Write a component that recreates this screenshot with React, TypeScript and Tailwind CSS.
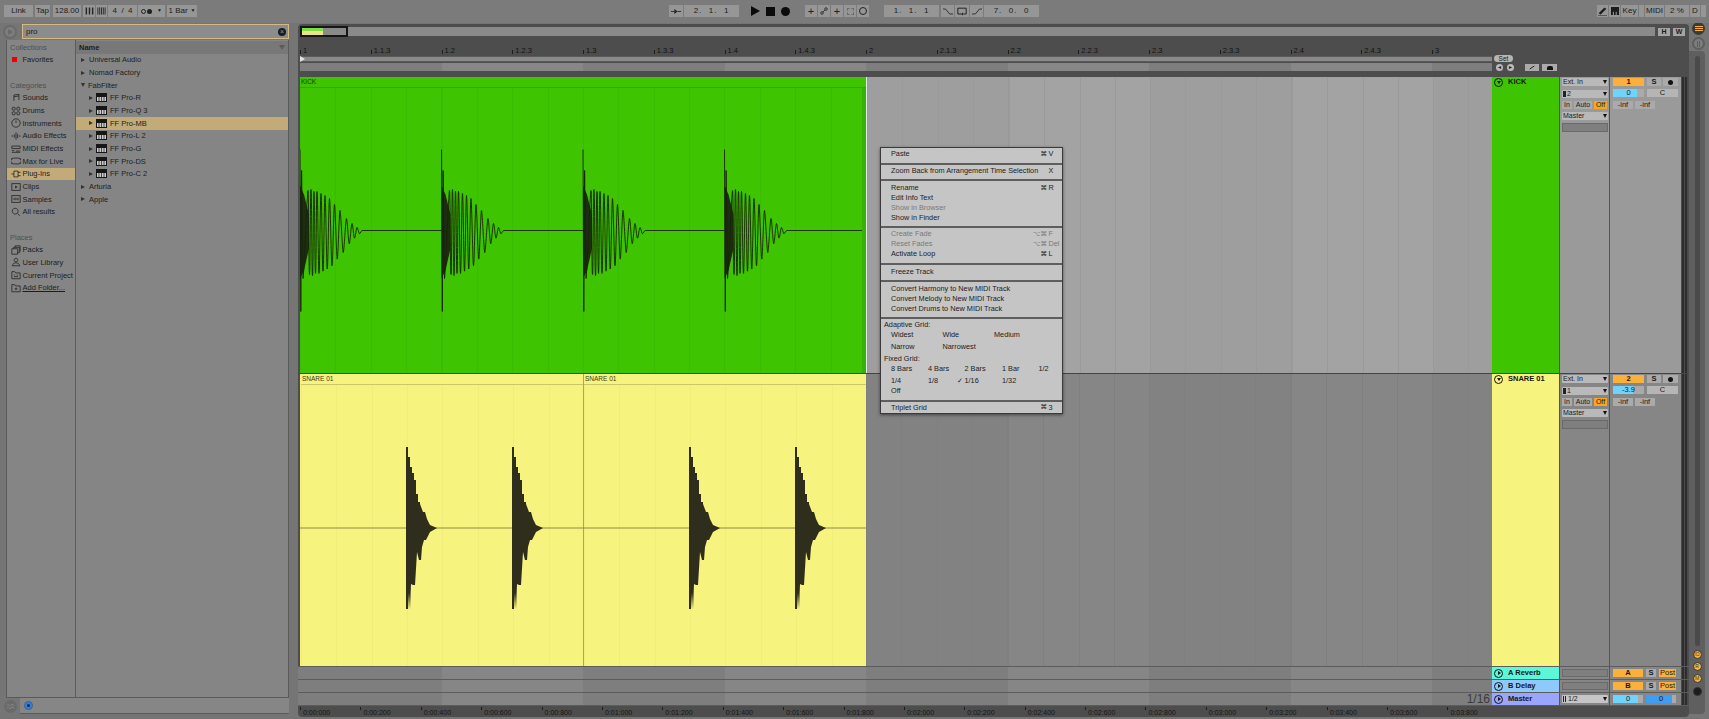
import type { ReactNode } from "react";

const FONT = "font-['Liberation_Sans','Noto_Sans',sans-serif]";

const RULER = ["1", "1.1.3", "1.2", "1.2.3", "1.3", "1.3.3", "1.4", "1.4.3", "2", "2.1.3", "2.2", "2.2.3", "2.3", "2.3.3", "2.4", "2.4.3", "3"];
const TIMES = ["0:00:000", "0:00:200", "0:00:400", "0:00:600", "0:00:800", "0:01:000", "0:01:200", "0:01:400", "0:01:600", "0:01:800", "0:02:000", "0:02:200", "0:02:400", "0:02:600", "0:02:800", "0:03:000", "0:03:200", "0:03:400", "0:03:600", "0:03:800"];

const stroke = { fill: "none", stroke: "#262626", strokeWidth: 1 };

const Glyph = ({ children }: { children: ReactNode }) => (
  <svg viewBox="0 0 12 12" className="w-[10px] h-[10px] shrink-0">
    {children}
  </svg>
);

const ICONS: Record<string, ReactNode> = {
  sounds: <path {...stroke} d="M3.5 9.5V2.5l6-1v7M3.5 4.5l6-1" />,
  drums: (
    <g {...stroke}>
      <rect x="1.5" y="1.5" width="3.5" height="3.5" rx="1" />
      <rect x="7" y="1.5" width="3.5" height="3.5" rx="1" />
      <rect x="1.5" y="7" width="3.5" height="3.5" rx="1" />
      <rect x="7" y="7" width="3.5" height="3.5" rx="1" />
    </g>
  ),
  instruments: <path {...stroke} d="M6 1a5 5 0 1 0 .01 0M6 3v3" />,
  audio: <path {...stroke} d="M0.5 6h2M4 4v4M6 1.5v9M8 3.5v5M9.5 6h2" />,
  midi: <path {...stroke} d="M1 2.5h10v3H1zM1 8h3M6 8.5h5M1 10h10" />,
  max: <path {...stroke} d="M3 2.5h6a2 2 0 0 1 0 7H3a2 2 0 0 1 0-7zM1.5 4h-1M1.5 8h-1M11.5 4h-1M11.5 8h-1" />,
  plug: <path {...stroke} d="M3.5 2.5h5v7h-5zM0.5 6h3M8.5 4h3M8.5 8h3" />,
  clips: <g><rect {...stroke} x="1" y="2" width="10" height="8" /><path d="M5 4.2 8 6 5 7.8z" fill="#262626" /></g>,
  samples: <g><rect {...stroke} x="1" y="2" width="10" height="8" /><path {...stroke} d="M3.5 5v2M5 4.5v3M7 5v2M8.5 4.5v3" /></g>,
  search: <path {...stroke} d="M5 1.5a3.5 3.5 0 1 0 .01 0M7.6 7.6l3 3" />,
  packs: <path {...stroke} d="M1 4.5h7v6.5H1zM3 4.5V2.8h7v6.4H8M5 2.8V1h6v6.4h-1" />,
  user: <path {...stroke} d="M6 1.5a2.2 2.2 0 1 0 .01 0M1 10.5h10M2 10.5c0-3 2-3.5 4-3.5s4 .5 4 3.5" />,
  project: <path {...stroke} d="M1 2h3.5l1 1.5H11V10.5H1zM3.5 6h1M7 6h1.5M3.5 8h5" />,
  folder: <path {...stroke} d="M1 2h3.5l1 1.5H11V10.5H1zM4.5 7h3M6 5.5v3" />,
};

type SideItem = { label?: string; icon?: string; head?: boolean; active?: boolean; red?: boolean; link?: boolean };
const SIDE: SideItem[] = [
  { label: "Collections", head: true },
  { label: "Favorites", red: true },
  {},
  { label: "Categories", head: true },
  { label: "Sounds", icon: "sounds" },
  { label: "Drums", icon: "drums" },
  { label: "Instruments", icon: "instruments" },
  { label: "Audio Effects", icon: "audio" },
  { label: "MIDI Effects", icon: "midi" },
  { label: "Max for Live", icon: "max" },
  { label: "Plug-Ins", icon: "plug", active: true },
  { label: "Clips", icon: "clips" },
  { label: "Samples", icon: "samples" },
  { label: "All results", icon: "search" },
  {},
  { label: "Places", head: true },
  { label: "Packs", icon: "packs" },
  { label: "User Library", icon: "user" },
  { label: "Current Project", icon: "project" },
  { label: "Add Folder...", icon: "folder", link: true },
];

type ListItem = { label: string; plugin?: boolean; open?: boolean; active?: boolean };
const LIST: ListItem[] = [
  { label: "Universal Audio" },
  { label: "Nomad Factory" },
  { label: "FabFilter", open: true },
  { label: "FF Pro-R", plugin: true },
  { label: "FF Pro-Q 3", plugin: true },
  { label: "FF Pro-MB", plugin: true, active: true },
  { label: "FF Pro-L 2", plugin: true },
  { label: "FF Pro-G", plugin: true },
  { label: "FF Pro-DS", plugin: true },
  { label: "FF Pro-C 2", plugin: true },
  { label: "Arturia" },
  { label: "Apple" },
];

function Ctl({ w, children, className = "" }: { w: string; children?: ReactNode; className?: string }) {
  return (
    <div className={`${w} h-[12px] shrink-0 bg-[#969696] flex items-center justify-center text-[8px] text-[#202020] ${className}`}>
      {children}
    </div>
  );
}

function Bars({ dense }: { dense?: boolean }) {
  return (
    <svg viewBox="0 0 10 8" className="w-[9px] h-[8px]">
      <path d={dense ? "M1 0v8M3 0v8M5 0v8M7 0v8M9 0v8" : "M1.5 0v8M5 0v8M8.5 0v8"} stroke="#262626" strokeWidth={dense ? 1 : 1.6} />
    </svg>
  );
}

function TopBar() {
  return (
    <div className="h-[23px] shrink-0 bg-[#7b7b7b] flex items-start pt-[5px] relative">
      <div className="flex ml-[4px] w-[665px]">
        <Ctl w="w-[29px]">Link</Ctl>
        <Ctl w="w-[15px]" className="ml-[2px]">Tap</Ctl>
        <Ctl w="w-[28px]" className="ml-[3px]">128.00</Ctl>
        <Ctl w="w-[12px]" className="ml-[2px]"><Bars /></Ctl>
        <Ctl w="w-[11px]" className="ml-[1px]"><Bars dense /></Ctl>
        <Ctl w="w-[29px]" className="ml-[1px]">4&nbsp;&nbsp;/&nbsp;&nbsp;4</Ctl>
        <Ctl w="w-[27px]" className="ml-[1px] gap-[1px]">
          <span className="w-[5px] h-[5px] rounded-full border border-[#222]" />
          <span className="w-[5px] h-[5px] rounded-full bg-[#222]" />
          <span className="ml-[4px] text-[5px]">▼</span>
        </Ctl>
        <Ctl w="w-[30px]" className="ml-[2px] gap-[3px]">1 Bar <span className="text-[5px]">▼</span></Ctl>
      </div>
      <Ctl w="w-[14px]">
        <svg viewBox="0 0 12 6" className="w-[10px] h-[5px]"><path d="M0 3h4M8 3h4" stroke="#222" /><path d="M4 0l4 3-4 3z" fill="#222" /></svg>
      </Ctl>
      <Ctl w="w-[55px]" className="ml-[1px] tracking-[1px]">2.&nbsp;&nbsp;1.&nbsp;&nbsp;1</Ctl>
      <div className="flex items-center h-[12px] ml-[12px] gap-[6px] w-[54px]">
        <span className="w-0 h-0 border-y-[5px] border-y-transparent border-l-[9px] border-l-[#0b0b0b]" />
        <span className="w-[9px] h-[9px] bg-[#0b0b0b]" />
        <span className="w-[9px] h-[9px] rounded-full bg-[#0b0b0b]" />
      </div>
      <div className="flex gap-[1px]">
        <Ctl w="w-[12px]" className="text-[11px]">+</Ctl>
        <Ctl w="w-[12px]">
          <svg viewBox="0 0 10 10" className="w-[8px] h-[8px]"><path d="M2 8l6-6" stroke="#222" /><circle cx="2.5" cy="7.5" r="1.6" fill="#969696" stroke="#222" /><circle cx="7.5" cy="2.5" r="1.6" fill="#969696" stroke="#222" /></svg>
        </Ctl>
        <Ctl w="w-[12px]" className="text-[#6b6b6b] text-[11px]">+</Ctl>
        <Ctl w="w-[12px]">
          <span className="w-[7px] h-[7px] border border-dashed border-[#6b6b6b]" />
        </Ctl>
        <Ctl w="w-[12px]">
          <span className="w-[8px] h-[8px] rounded-full border-[1.5px] border-[#222]" />
        </Ctl>
      </div>
      <Ctl w="w-[55px]" className="ml-[15px] tracking-[1px]">1.&nbsp;&nbsp;1.&nbsp;&nbsp;1</Ctl>
      <Ctl w="w-[13px]" className="ml-[2px]">
        <svg viewBox="0 0 12 8" className="w-[10px] h-[7px]"><path d="M0 1h3l5 6h4" fill="none" stroke="#222" /></svg>
      </Ctl>
      <Ctl w="w-[14px]" className="ml-[1px]">
        <svg viewBox="0 0 12 10" className="w-[10px] h-[9px]"><path d="M6 8H1V1h10v7H8" fill="none" stroke="#222" strokeWidth="1.2" /><path d="M6 6v4l2-2z" fill="#222" /></svg>
      </Ctl>
      <Ctl w="w-[13px]" className="ml-[1px]">
        <svg viewBox="0 0 12 8" className="w-[10px] h-[7px]"><path d="M0 7h4l5-6h3" fill="none" stroke="#222" /></svg>
      </Ctl>
      <Ctl w="w-[55px]" className="ml-[1px] tracking-[1px]">7.&nbsp;&nbsp;0.&nbsp;&nbsp;0</Ctl>

      <div className="ml-auto flex mr-[3px]">
        <Ctl w="w-[11px]">
          <svg viewBox="0 0 10 10" className="w-[9px] h-[9px]"><path d="M1 7l6-6 2 1-6 6zM0 9.5h10" fill="#1c1c1c" stroke="#1c1c1c" strokeWidth=".6" /></svg>
        </Ctl>
        <Ctl w="w-[11px]" className="ml-[1px]">
          <svg viewBox="0 0 10 10" className="w-[8px] h-[8px]"><path d="M0 0h10v10H0z" fill="#1c1c1c" /><path d="M3 6v4M6.5 6v4" stroke="#bbb" /></svg>
        </Ctl>
        <Ctl w="w-[17px]" className="ml-[1px]">Key</Ctl>
        <Ctl w="w-[5px]" className="ml-[1px]" />
        <Ctl w="w-[19px]" className="ml-[1px]">MIDI</Ctl>
        <Ctl w="w-[24px]" className="ml-[1px]">2 %</Ctl>
        <Ctl w="w-[10px]" className="ml-[1px]">D</Ctl>
        <Ctl w="w-[5px]" className="ml-[1px]" />
      </div>
    </div>
  );
}

function Browser() {
  return (
    <div className="w-[298px] shrink-0 flex flex-col">
      <div className="h-[17px] flex items-center">
        <div className="w-[14px] h-[14px] ml-[3px] rounded-full border-2 border-[#6a6a6a] bg-[#7d7d7d] flex items-center justify-center">
          <span className="w-0 h-0 border-y-[3px] border-y-transparent border-l-[5px] border-l-[#6a6a6a] ml-px" />
        </div>
        <div className="ml-[5px] w-[267px] h-[15px] bg-[#8c8c8c] border border-[#d2bb83] flex items-center pl-[3px] pr-[2px] text-[8px] text-[#1c1c1c]">
          pro
          <span className="ml-auto w-[8px] h-[8px] rounded-full bg-[#1c1c1c] text-[#999] text-[7px] leading-[8px] text-center">×</span>
        </div>
      </div>
      <div className="ml-[6px] w-[283px] h-[658px] flex bg-[#858585] border-b border-[#5a5a5a] border-x">
        <div className="w-[69px] shrink-0 border-r border-[#5c5c5c] pt-px">
          {SIDE.map((s, i) => (
            <div key={i} className={`h-[12.67px] flex items-center gap-[1.5px] whitespace-nowrap text-[7.5px] ${s.active ? "bg-[#c2ab78]" : ""} ${s.head ? "pl-[3px] text-[#4f4f4f]" : "pl-[4px] text-[#1d1d1d]"}`}>
              {s.red && <span className="w-[5px] h-[5px] ml-[1px] mr-[4px] bg-[#f00000]" />}
              {s.icon && <Glyph>{ICONS[s.icon]}</Glyph>}
              <span className={s.link ? "underline" : ""}>{s.label}</span>
            </div>
          ))}
        </div>
        <div className="flex-1 pt-px">
          <div className="h-[12.67px] bg-[#787878] flex items-center pl-[3px] pr-[3px] text-[7.5px] font-semibold text-[#1d1d1d]">
            Name
            <span className="ml-auto w-0 h-0 border-x-[3px] border-x-transparent border-t-[5px] border-t-[#5c5c5c]" />
          </div>
          {LIST.map((r) => (
            <div key={r.label} className={`h-[12.67px] flex items-center text-[7.5px] text-[#1d1d1d] ${r.plugin ? "pl-[13px]" : "pl-[5px]"} ${r.active ? "bg-[#c2ab78]" : ""}`}>
              {r.open ? (
                <span className="w-0 h-0 border-x-[2.5px] border-x-transparent border-t-[4px] border-t-[#333]" />
              ) : (
                <span className="w-0 h-0 border-y-[2.5px] border-y-transparent border-l-[4px] border-l-[#333] mr-px" />
              )}
              {r.plugin && (
                <svg viewBox="0 0 11 9" className="w-[11px] h-[9px] ml-[2px]">
                  <rect x=".5" y=".5" width="10" height="8" fill="#c9c9c9" stroke="#161616" />
                  <rect x="1" y="1" width="9" height="3" fill="#161616" />
                  <path d="M3 4v4M5.5 4v4M8 4v4" stroke="#161616" strokeWidth=".7" />
                </svg>
              )}
              <span className="ml-[3px]">{r.label}</span>
            </div>
          ))}
        </div>
      </div>
      <div className="flex h-[16px]">
        <div className="w-[20px] flex items-center justify-center">
          <span className="w-[13px] h-[13px] rounded-full bg-[#6a6a6a] flex items-center justify-center">
            <svg viewBox="0 0 10 10" className="w-[9px] h-[9px]"><path d="M1 4c2-3 3 2 4 0s2-2 4 0M1 7c2-3 3 2 4 0s2-2 4 0" fill="none" stroke="#8a8a8a" /></svg>
          </span>
        </div>
        <div className="w-[269px] bg-[#868686] border-b border-[#5a5a5a] flex items-center pl-[4px]">
          <span className="w-[9px] h-[9px] rounded-full bg-[#2f7fe0] border border-[#45617f] flex items-center justify-center">
            <span className="w-[3px] h-[3px] rounded-full bg-[#0c2c55]" />
          </span>
        </div>
      </div>
    </div>
  );
}

function KickWave() {
  const starts = [0, 141.5, 283, 424.5];
  const peaks: [number, number][] = [[8, 40], [11, 41], [14, 39], [17, 39], [21, 37], [25, 35], [29.5, 32], [34.5, 26], [40, 20], [46.5, 12], [52, 7], [57, 3]];
  const c = 142.5;
  const ripples = (x0: number) => {
    let d = `M${x0} ${c - 81}L${x0 + 0.8} ${c + 81}L${x0 + 1.6} ${c - 60}L${x0 + 3} ${c + 48}`;
    let x = x0 + 3;
    let y = c + 48;
    peaks.forEach(([t, a], i) => {
      const next = peaks[i + 1] ? peaks[i + 1][0] : t + 5;
      const upX = x0 + t;
      const downX = x0 + (t + next) / 2;
      const downY = c + a * 1.1;
      // rounded swings instead of straight saws
      d += `C${x + 0.8} ${y} ${upX - 0.8} ${c - a} ${upX} ${c - a}`;
      d += `C${upX + 0.8} ${c - a} ${downX - 0.8} ${downY} ${downX} ${downY}`;
      x = downX;
      y = downY;
    });
    return d + `L${x0 + 62} ${c}L${x0 + 141.5} ${c}`;
  };
  return (
    <svg viewBox="0 0 566 285" className="absolute left-0 top-0 w-[566px] h-[285px]">
      {starts.map((x) => (
        <g key={x}>
          <path d={`M${x} ${c - 45}L${x + 4} ${c - 36}L${x + 9} ${c - 16}L${x + 9} ${c + 18}L${x + 4} ${c + 40}L${x} ${c + 48}z`} fill="#1d2e0f" />
          <path d={ripples(x)} fill="none" stroke="#17240c" strokeWidth="0.9" />
        </g>
      ))}
    </svg>
  );
}

function SnareWave() {
  const top = [[0, -81], [2, -81], [2, -71], [4, -71], [4, -61], [6, -61], [6, -55], [8, -55], [8, -48], [10, -48], [10, -34], [12, -34], [12, -26], [14, -26], [14, -24], [17, -16], [19, -16], [21, -9], [24, -3], [31, 0]];
  const bottom = [[24, 4], [20, 12], [18, 12], [16, 19], [15, 32], [13, 32], [11, 24], [9, 57], [7, 57], [5, 56], [4, 81], [3, 65], [2, 81], [0, 81]];
  const c = 143;
  const shape = (x0: number) => [...top, ...bottom].map(([x, y]) => `${x0 + x},${c + y}`).join(" ");
  return (
    <svg viewBox="0 0 566 281" className="absolute left-0 top-0 w-[566px] h-[281px]">
      <path d={`M0 ${c}H566`} stroke="#8d8a4f" strokeWidth="1.2" />
      {[106, 212, 389, 495].map((x) => (
        <polygon key={x} points={shape(x)} fill="#2f2e1c" />
      ))}
    </svg>
  );
}

function Clip({ name, first }: { name: string; first?: boolean }) {
  return (
    <div className={`w-[283px] h-full flex flex-col bg-[#f6f37f] border-l ${first ? "border-transparent" : "border-[#aaa765]"}`}>
      <div className="h-[11px] shrink-0 border-b border-[#c9c66c] flex items-center pl-px text-[6.5px] text-[#3b3a20]">{name}</div>
      <div className="flex-1 bg-[repeating-linear-gradient(90deg,#f0ed7b_0,#f0ed7b_1px,transparent_1px,transparent_35.375px)]" />
    </div>
  );
}

const SelectBox = ({ label, className = "" }: { label: ReactNode; className?: string }) => (
  <div className={`w-[46px] h-[8px] rounded-[1px] bg-[#b9b9b9] flex items-center px-px text-[7px] text-[#1a1a1a] ${className}`}>
    <span className="flex-1 whitespace-nowrap">{label}</span>
    <span className="w-0 h-0 border-x-[2.5px] border-x-transparent border-t-[4px] border-t-[#111]" />
  </div>
);

function Mixer({ n, vol, fill, selected }: { n: string; vol: string; fill: string; selected?: boolean }) {
  const bg = selected ? "bg-[#9a9a9a]" : "bg-[#868686]";
  return (
    <>
      <div className={`w-[51px] shrink-0 border-x border-[#555] pl-[2px] pt-[1px] flex flex-col gap-[4px] ${bg}`}>
        <SelectBox label="Ext. In" />
        <SelectBox label={<span><span className="inline-block w-[3px] h-[6px] bg-[#222] mr-px align-[-1px]" />{n === "1" ? "2" : "1"}</span>} />
        <div className="flex gap-[2px] text-[7px] text-[#1a1a1a] h-[8px] mt-[-1px] leading-[8px] text-center">
          <span className="w-[10px] bg-[#aaa]">In</span>
          <span className="w-[18px] bg-[#aaa]">Auto</span>
          <span className="w-[13px] bg-[#f5a623]">Off</span>
        </div>
        <SelectBox label="Master" className="mt-[-1px]" />
        <div className="w-[46px] h-[9px] bg-[#7f7f7f] border border-[#6a6a6a] mt-[-1px]" />
      </div>
      <div className={`w-[71px] shrink-0 pl-[3px] pt-[1px] flex flex-col gap-[3px] text-[7.5px] text-[#1a1a1a] ${bg}`}>
        <div className="flex h-[8px] leading-[8px] text-center">
          <span className="w-[31px] bg-[#fbb03b] font-semibold">{n}</span>
          <span className="w-[14px] ml-[3px] bg-[#aaa] font-semibold">S</span>
          <span className="w-[15px] ml-[2px] bg-[#aaa] flex items-center justify-center"><span className="w-[5px] h-[5px] rounded-full bg-[#111]" /></span>
        </div>
        <div className="flex h-[8px] leading-[8px] text-center">
          <span className="w-[31px] bg-[#aaa] relative">
            <span className={`absolute inset-y-0 left-0 bg-[#6fd3fb] ${fill}`} />
            <span className="relative">{vol}</span>
          </span>
          <span className="w-[31px] ml-[3px] bg-[#b5b5b5]">C</span>
        </div>
        <div className="flex h-[8px] leading-[8px] text-center mt-[1px]">
          <span className="w-[20px] bg-[#aaa]">-inf</span>
          <span className="w-[20px] ml-[2px] bg-[#aaa]">-inf</span>
        </div>
      </div>
      <div className="w-[7px] shrink-0 bg-[#4b4b4b] flex gap-px px-px">
        <span className="w-[2px] bg-[#2d2d2d]" />
        <span className="w-[2px] bg-[#2d2d2d]" />
      </div>
    </>
  );
}

function TrackTitle({ name, bg }: { name: string; bg: string }) {
  return (
    <div className={`w-[67px] shrink-0 pl-[2px] flex items-start gap-[4px] text-[7.5px] font-semibold text-[#161616] ${bg}`}>
      <span className="w-[9px] h-[9px] mt-px rounded-full border border-[#161616] flex items-center justify-center">
        <span className="w-0 h-0 border-x-[2px] border-x-transparent border-t-[3px] border-t-[#161616]" />
      </span>
      <span className="leading-[8px] mt-px ml-[1px]">{name}</span>
    </div>
  );
}

function EmptyLane({ a, b, line }: { a: string; b: string; line: string }) {
  const cells = [0, 1, 2, 3, 4];
  return (
    <div className="flex h-full">
      {cells.map((i) => (
        <div key={i} className={`w-[141.5px] shrink-0 h-full ${i % 2 ? b : a} ${line}`} />
      ))}
      <div className={`w-[60px] shrink-0 h-full ${b} ${line}`} />
    </div>
  );
}

function ReturnRow({ name, color, letter, master, children }: { name: string; color: string; letter?: string; master?: boolean; children?: ReactNode }) {
  const bands = [0, 1, 2, 3, 4, 5, 6, 7];
  return (
    <div className="h-[13px] flex border-b border-[#5c5c5c] shrink-0">
      <div className="w-[1194px] shrink-0 flex pl-[2px] relative bg-[#7e7e7e] overflow-hidden">
        {bands.map((i) => (
          <div key={i} className={`w-[141.5px] h-full shrink-0 ${i % 2 ? "bg-[#868686]" : "bg-[#7e7e7e]"}`} />
        ))}
        {children}
      </div>
      <div className={`w-[67px] shrink-0 flex items-center pl-[2px] gap-[5px] text-[7.5px] font-semibold text-[#161616] ${color}`}>
        <span className="w-[9px] h-[9px] rounded-full border border-[#161616] flex items-center justify-center">
          <span className="w-0 h-0 border-y-[2px] border-y-transparent border-l-[3px] border-l-[#161616] ml-px" />
        </span>
        {name}
      </div>
      <div className="w-[51px] shrink-0 border-x border-[#555] bg-[#868686] pl-[2px] flex items-center">
        {master ? (
          <SelectBox label={<span><span className="inline-block w-[3px] h-[6px] mr-[2px] border-x border-[#222] align-[-1px]" />1/2</span>} className="!bg-[#c6c6c6]" />
        ) : (
          <div className="w-[46px] h-[8px] bg-[#7f7f7f] border border-[#6a6a6a]" />
        )}
      </div>
      <div className="w-[71px] shrink-0 bg-[#868686] pl-[3px] flex items-center text-[7.5px] text-[#1a1a1a] text-center leading-[8px]">
        {master ? (
          <>
            <span className="w-[30px] h-[8px] bg-[#aaa] relative"><span className="absolute inset-y-0 left-0 w-[25px] bg-[#6fd3fb]" /><span className="relative">0</span></span>
            <span className="w-[30px] h-[8px] ml-[3px] bg-[#aaa] relative"><span className="absolute inset-y-0 left-0 w-[26px] bg-[#3f9df2]" /><span className="relative">0</span></span>
          </>
        ) : (
          <>
            <span className="w-[30px] h-[8px] bg-[#fbb03b] font-semibold">{letter}</span>
            <span className="w-[10px] h-[8px] ml-[3px] bg-[#aaa] font-semibold">S</span>
            <span className="w-[17px] h-[8px] ml-[3px] bg-[#fbb03b]">Post</span>
          </>
        )}
      </div>
      <div className="w-[7px] shrink-0 bg-[#4b4b4b] flex gap-px px-px">
        <span className="w-[2px] bg-[#2d2d2d]" />
        <span className="w-[2px] bg-[#2d2d2d]" />
      </div>
    </div>
  );
}

function Arrangement() {
  return (
    <div className="w-[1391px] shrink-0 h-[693px] mt-px bg-[#4d4d4d] rounded-[4px] flex flex-col overflow-hidden">
      <div className="h-[12px] shrink-0 flex items-center pl-[2px] pt-[3px]">
        <div className="w-[48px] h-[11px] border-2 border-[#161616] flex bg-[#8a8a8a]">
          <div className="w-[21px] flex flex-col">
            <div className="h-[3px] bg-[#7ddf45]" />
            <div className="flex-1 bg-[#e9e68a]" />
          </div>
        </div>
        <div className="w-[1307px] h-[9px] bg-[#8a8a8a]" />
        <span className="w-[12px] h-[8px] ml-[3px] bg-[#a5a5a5] text-[7px] leading-[8px] text-center font-semibold text-[#1a1a1a]">H</span>
        <span className="w-[12px] h-[8px] ml-[3px] bg-[#a5a5a5] text-[7px] leading-[8px] text-center font-semibold text-[#1a1a1a]">W</span>
      </div>

      <div className="h-[41px] shrink-0 flex">
        <div className="w-[1194px] shrink-0 pl-[2px] flex flex-col">
          <div className="h-[19px] flex items-end overflow-hidden">
            {RULER.map((r) => (
              <div key={r} className="w-[70.75px] shrink-0 h-[6px] mb-px flex items-center text-[7.5px] text-[#111]">
                <span className="w-px h-[4px] bg-[#1d1d1d] self-end mr-[2px]" />
                {r}
              </div>
            ))}
          </div>
          <div className="h-[6px] mt-px bg-[#8a8a8a] flex items-center border-y border-[#5a5a5a]">
            <span className="w-0 h-0 border-y-[3px] border-y-transparent border-l-[5px] border-l-[#e2e2e2]" />
          </div>
          <div className="h-[8px] mt-px flex">
            {[0, 1, 2, 3, 4, 5, 6, 7].map((i) => (
              <div key={i} className={`w-[141.5px] shrink-0 ${i % 2 ? "bg-[#878787]" : "bg-[#7e7e7e]"}`} />
            ))}
            <div className="flex-1 bg-[#7e7e7e]" />
          </div>
        </div>
        <div className="flex-1 pl-[2px] pt-[19px] flex flex-col text-[#1a1a1a]">
          <span className="w-[19px] h-[7px] rounded-full bg-[#b5b5b5] text-[6.5px] leading-[7px] text-center">Set</span>
          <div className="flex items-center mt-[2px] pl-[2px]">
            <span className="w-[7px] h-[7px] rounded-full bg-[#bbb] text-[6px] leading-[6px] text-center">◂</span>
            <span className="w-[7px] h-[7px] ml-[4px] rounded-full bg-[#bbb] text-[6px] leading-[6px] text-center">▸</span>
            <span className="w-[14px] h-[7px] ml-[11px] bg-[#aaa] flex items-center justify-center">
              <svg viewBox="0 0 8 6" className="w-[6px] h-[5px]"><path d="M1 5l6-4" stroke="#111" strokeWidth="1.2" /></svg>
            </span>
            <span className="w-[15px] h-[7px] ml-[3px] bg-[#aaa] flex items-center justify-center">
              <span className="w-[6px] h-[4px] bg-[#111] rounded-t-[2px]" />
            </span>
          </div>
        </div>
      </div>

      <div className="h-[297px] shrink-0 flex border-b border-[#45453f]">
        <div className="w-[1194px] shrink-0 pl-[2px] flex relative">
          <div className="w-[566px] shrink-0 flex flex-col bg-[#3ec400]">
            <div className="h-[11px] border-b border-[#34a802] flex items-center pl-px text-[6.5px] text-[#15400a]">KICK</div>
            <div className="flex-1 relative bg-[repeating-linear-gradient(90deg,#3bbc00_0,#3bbc00_1px,transparent_1px,transparent_35.375px)]">
              <KickWave />
              <div className="absolute right-0 inset-y-0 w-[4px] bg-[#39b004]" />
            </div>
          </div>
          <div className="w-px shrink-0 bg-[#dfe9ee]" />
          <div className="flex-1 overflow-hidden">
            <EmptyLane a="bg-[#9e9e9e]" b="bg-[#a3a3a3]" line="bg-[repeating-linear-gradient(90deg,#9a9a9a_0,#9a9a9a_1px,transparent_1px,transparent_35.375px)]" />
          </div>
        </div>
        <TrackTitle name="KICK" bg="bg-[#3ec400]" />
        <Mixer n="1" vol="0" fill="w-[24px]" selected />
      </div>

      <div className="h-[293px] shrink-0 flex border-b border-[#5c5c5c]">
        <div className="w-[1194px] shrink-0 pl-[2px] flex">
          <div className="w-[566px] shrink-0 flex relative">
            <Clip name="SNARE 01" first />
            <Clip name="SNARE 01" />
            <div className="absolute left-0 top-[11px] w-[566px] h-[281px]">
              <SnareWave />
            </div>
          </div>
          <div className="flex-1 overflow-hidden">
            <EmptyLane a="bg-[#828282]" b="bg-[#868686]" line="bg-[repeating-linear-gradient(90deg,#7f7f7f_0,#7f7f7f_1px,transparent_1px,transparent_35.375px)]" />
          </div>
        </div>
        <TrackTitle name="SNARE 01" bg="bg-[#f6f37f]" />
        <Mixer n="2" vol="-3.9" fill="w-[20px]" />
      </div>

      <ReturnRow name="A Reverb" color="bg-[#5cf6d9]" letter="A" />
      <ReturnRow name="B Delay" color="bg-[#8fc8fa]" letter="B" />
      <ReturnRow name="Master" color="bg-[#99a6fb]" master>
        <span className="absolute right-[2px] top-[-1px] text-[12px] leading-[14px] text-[#3b3b3b]">1/16</span>
      </ReturnRow>

      <div className="h-[11px] shrink-0 pl-[2px] flex items-center">
        {TIMES.map((t) => (
          <div key={t} className="w-[60.4px] shrink-0 h-[9px] flex text-[7px] leading-[11px] text-[#141414]">
            <span className="w-px h-[3px] bg-[#1d1d1d] mr-[2px]" />
            {t}
          </div>
        ))}
      </div>
    </div>
  );
}

function RightStrip() {
  const dots = ["IO", "R", "M"];
  return (
    <div className="w-[20px] shrink-0 flex flex-col items-start">
      <div className="mt-[-1px] ml-[3px] w-[13px] h-[13px] rounded-full bg-[#3a3a3a] flex flex-col items-center justify-center gap-px">
        <span className="w-[8px] h-px bg-[#fbb03b]" />
        <span className="w-[8px] h-px bg-[#fbb03b]" />
        <span className="w-[8px] h-px bg-[#fbb03b]" />
      </div>
      <div className="mt-[2px] ml-[3px] w-[13px] h-[13px] rounded-full border-2 border-[#5e5e5e] bg-[#7d7d7d] flex items-center justify-center gap-px">
        <span className="w-px h-[6px] bg-[#5e5e5e]" />
        <span className="w-px h-[6px] bg-[#5e5e5e]" />
      </div>
      <div className="mt-[1px] w-[16px] h-[663px] bg-[#5f5f5f] rounded-r-[4px] flex flex-col items-center pt-[5px]">
        <div className="w-[5px] h-[590px] rounded-full bg-[#4a4a4a] mb-[2px]" />
        {dots.map((d) => (
          <span key={d} className="w-[9px] h-[9px] my-[1.7px] rounded-full bg-[#f3b63e] border border-[#333] text-[5px] leading-[7px] text-center text-[#333]">{d}</span>
        ))}
        <span className="w-[9px] h-[9px] my-[1.7px] rounded-full bg-[#1c1c1c] border border-[#333]" />
      </div>
    </div>
  );
}

type Row = { label: string; mod?: string; key2?: string; dim?: boolean };

const MenuRow = ({ label, mod, key2, dim }: Row) => (
  <div className={`h-[10px] pl-[10px] flex items-center whitespace-nowrap ${dim ? "text-[#7a7a7a]" : ""}`}>
    <span>{label}</span>
    {key2 && (
      <span className="ml-auto flex items-center">
        {mod && <span className="w-[17px] text-right text-[6.5px] font-['DejaVu_Sans',sans-serif]">{mod}</span>}
        <span className="w-[15px] pl-[1.5px]">{key2}</span>
      </span>
    )}
  </div>
);

const Sep = () => <div className="h-[2px] bg-[#5e5e5e] shrink-0" />;

function ContextMenu() {
  const cols = "grid grid-cols-[37px_36.5px_37.5px_36.5px_auto] pl-[10px]";
  return (
    <div className="absolute left-[880px] top-[147px] w-[183px] h-[267px] bg-[#c5c5c5] border border-[#3a3a3a] shadow-[0_1px_3px_rgba(0,0,0,0.5)] flex flex-col text-[7.3px] text-[#1c1c1c] z-10">
      <div className="h-[15px] pt-[1.5px]"><MenuRow label="Paste" mod="⌘" key2="V" /></div>
      <Sep />
      <div className="h-[14px] pt-[2px]"><MenuRow label="Zoom Back from Arrangement Time Selection" key2="X" /></div>
      <Sep />
      <div className="h-[45px] pt-[3px]">
        <MenuRow label="Rename" mod="⌘" key2="R" />
        <MenuRow label="Edit Info Text" />
        <MenuRow label="Show in Browser" dim />
        <MenuRow label="Show in Finder" />
      </div>
      <Sep />
      <div className="h-[35px] pt-[2px]">
        <MenuRow label="Create Fade" mod="⌥⌘" key2="F" dim />
        <MenuRow label="Reset Fades" mod="⌥⌘" key2="Del" dim />
        <MenuRow label="Activate Loop" mod="⌘" key2="L" />
      </div>
      <Sep />
      <div className="h-[15px] pt-[2.5px]"><MenuRow label="Freeze Track" /></div>
      <Sep />
      <div className="h-[36px] pt-[2.5px]">
        <MenuRow label="Convert Harmony to New MIDI Track" />
        <MenuRow label="Convert Melody to New MIDI Track" />
        <MenuRow label="Convert Drums to New MIDI Track" />
      </div>
      <Sep />
      <div className="h-[81px] pt-[1px]">
        <div className="h-[10px] pl-[3px] leading-[10px]">Adaptive Grid:</div>
        <div className="grid grid-cols-[51.5px_51.5px_auto] pl-[10px] h-[10px] leading-[10px]">
          <span>Widest</span><span>Wide</span><span>Medium</span>
        </div>
        <div className="grid grid-cols-[51.5px_51.5px_auto] pl-[10px] h-[10px] leading-[10px] mt-[1.5px] mb-[2.5px]">
          <span>Narrow</span><span>Narrowest</span>
        </div>
        <div className="h-[10px] pl-[3px] leading-[10px]">Fixed Grid:</div>
        <div className={`${cols} h-[10px] leading-[10px]`}>
          <span>8 Bars</span><span>4 Bars</span><span>2 Bars</span><span>1 Bar</span><span>1/2</span>
        </div>
        <div className={`${cols} h-[10px] leading-[10px] mt-[1.5px]`}>
          <span>1/4</span><span>1/8</span>
          <span className="flex gap-[2px] ml-[-8px]"><span className="w-[6px]">✓</span>1/16</span>
          <span>1/32</span>
        </div>
        <div className="h-[10px] leading-[10px] pl-[10px]">Off</div>
      </div>
      <Sep />
      <div className="flex-1 pt-px"><MenuRow label="Triplet Grid" mod="⌘" key2="3" /></div>
    </div>
  );
}

export default function App() {
  return (
    <div className={`relative w-[1709px] h-[719px] bg-[#757575] overflow-hidden flex flex-col ${FONT}`}>
      <TopBar />
      <div className="flex flex-1">
        <Browser />
        <Arrangement />
        <RightStrip />
      </div>
      <ContextMenu />
    </div>
  );
}
